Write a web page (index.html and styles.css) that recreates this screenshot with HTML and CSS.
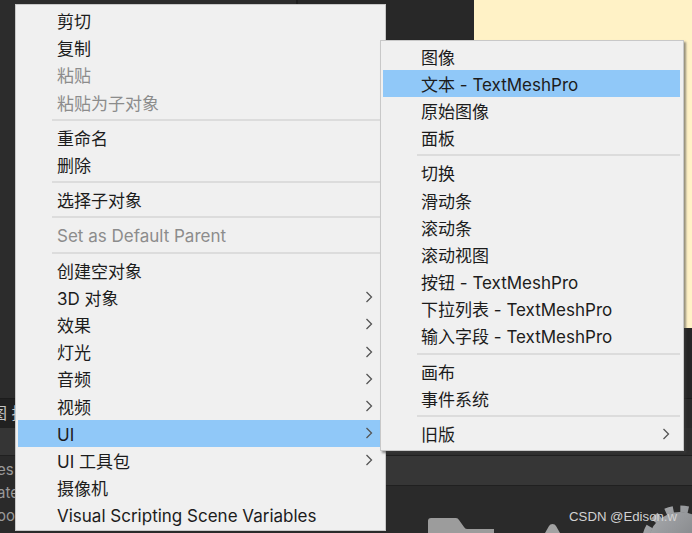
FILE: index.html
```html
<!DOCTYPE html>
<html lang="zh-CN">

<head>
    <meta charset="UTF-8">
    <title>Unity GameObject Menu</title>
    <link rel="stylesheet" href="styles.css">
</head>

<body>

    <!-- Editor behind the menus -->
    <div class="editor">
        <div class="scene">
            <div class="scene-side"></div>
            <div class="scene-dark"></div>
            <div class="scene-canvas"></div>
        </div>
        <div class="scene-rest">
            <div class="rest-side"></div>
        </div>
        <div class="tabs"><div class="tabs-text">图 技</div></div>
        <div class="toolbar"><div class="toolbar-side"></div></div>
        <div class="assets">
            <div class="asset-names">es<br>ate<br>oo</div>
            <div class="asset-main">
                <div class="asset-band"></div>
                <svg class="asset-icons" width="692" height="29" viewBox="0 0 692 29">
                    <defs>
                        <linearGradient id="gearFill" x1="0" y1="0" x2="1" y2="1">
                            <stop offset="0" stop-color="#a9abae"/>
                            <stop offset="1" stop-color="#6d6f73"/>
                        </linearGradient>
                    </defs>
                    <path d="M428 29V17q0-3 3-3h25q2 0 3 2l5 7q1 2 3 2h27v4z" fill="#9c9c9c"/>
                    <path d="M545 29l4-7q1-2 3.500-2t3.500 2l4 7z" fill="#a2a2a2"/>
                    <circle cx="680" cy="40" r="32" fill="url(#gearFill)"/>
                    <circle cx="680" cy="40" r="35" fill="none" stroke="url(#gearFill)" stroke-width="7" stroke-dasharray="8 7"/>
                </svg>
                <div class="watermark">CSDN @Edison.w</div>
            </div>
        </div>
    </div>

    <!-- Main context menu -->
    <div class="menu menu-main">
        <div class="item">剪切</div>
        <div class="item">复制</div>
        <div class="item off">粘贴</div>
        <div class="item off">粘贴为子对象</div>
        <div class="sep"></div>
        <div class="item">重命名</div>
        <div class="item">删除</div>
        <div class="sep"></div>
        <div class="item">选择子对象</div>
        <div class="sep"></div>
        <div class="item off latin">Set as Default Parent</div>
        <div class="sep"></div>
        <div class="item">创建空对象</div>
        <div class="item">3D 对象<svg class="arrow" width="8" height="12" viewBox="0 0 8 12"><path d="M1.5 1l5 5-5 5"/></svg></div>
        <div class="item">效果<svg class="arrow" width="8" height="12" viewBox="0 0 8 12"><path d="M1.5 1l5 5-5 5"/></svg></div>
        <div class="item">灯光<svg class="arrow" width="8" height="12" viewBox="0 0 8 12"><path d="M1.5 1l5 5-5 5"/></svg></div>
        <div class="item">音频<svg class="arrow" width="8" height="12" viewBox="0 0 8 12"><path d="M1.5 1l5 5-5 5"/></svg></div>
        <div class="item">视频<svg class="arrow" width="8" height="12" viewBox="0 0 8 12"><path d="M1.5 1l5 5-5 5"/></svg></div>
        <div class="item active latin">UI<svg class="arrow" width="8" height="12" viewBox="0 0 8 12"><path d="M1.5 1l5 5-5 5"/></svg></div>
        <div class="item">UI 工具包<svg class="arrow" width="8" height="12" viewBox="0 0 8 12"><path d="M1.5 1l5 5-5 5"/></svg></div>
        <div class="item">摄像机</div>
        <div class="item latin">Visual Scripting Scene Variables</div>
    </div>

    <!-- UI submenu -->
    <div class="menu menu-sub">
        <div class="item">图像</div>
        <div class="item active">文本 - TextMeshPro</div>
        <div class="item">原始图像</div>
        <div class="item">面板</div>
        <div class="sep"></div>
        <div class="item">切换</div>
        <div class="item">滑动条</div>
        <div class="item">滚动条</div>
        <div class="item">滚动视图</div>
        <div class="item">按钮 - TextMeshPro</div>
        <div class="item">下拉列表 - TextMeshPro</div>
        <div class="item">输入字段 - TextMeshPro</div>
        <div class="sep"></div>
        <div class="item">画布</div>
        <div class="item">事件系统</div>
        <div class="sep"></div>
        <div class="item">旧版<svg class="arrow" width="8" height="12" viewBox="0 0 8 12"><path d="M1.5 1l5 5-5 5"/></svg></div>
    </div>

</body>

</html>
```

FILE: styles.css
```css
/* General Styling */
html,
body {
    margin: 0;
    height: 533px;
    overflow: hidden;
    background-color: #2a2a2a;
}

body {
    font-family: Inter, "Noto Sans CJK SC", sans-serif;
}

/* Editor background */
.editor {
    display: flex;
    flex-direction: column;
    height: 533px;
}

.scene {
    display: flex;
    height: 328px;
}

.scene-side {
    width: 296px;
    background-color: #2c2c2c;
    border-right: 2px solid #1e1e1e;
}

.scene-dark {
    flex: 1;
    background-color: #282828;
}

.scene-canvas {
    width: 218px;
    background-color: #fff2c6;
}

.scene-rest {
    height: 70px;
    background-color: #262626;
    border-bottom: 1px solid #1c1c1c;
}

.rest-side {
    width: 298px;
    height: 70px;
    background-color: #2c2c2c;
}

.tabs {
    height: 29px;
    background-color: #2a2a2a;
    overflow: hidden;
}

.tabs-text {
    width: 100px;
    text-indent: -9px;
    background-color: #212121;
    color: #c4c4c4;
    font-size: 16px;
    line-height: 29px;
}

.toolbar {
    box-sizing: border-box;
    height: 28px;
    background-color: #2e2e2e;
    border-bottom: 1px solid #202020;
}

.toolbar-side {
    width: 100px;
    height: 27px;
    background-color: #353535;
}

.assets {
    flex: 1;
    display: flex;
    background-color: #2a2a2a;
    color: #9a9a9a;
    font-size: 15px;
    line-height: 23px;
    overflow: hidden;
}

.asset-names {
    margin-left: -3px;
    padding-top: 2px;
    width: 103px;
}

.asset-main {
    flex: 1;
}

.asset-band {
    height: 29px;
    background-color: #363636;
    border-bottom: 1px solid #202020;
}

.asset-icons {
    position: absolute;
    left: 0;
    bottom: 0;
}

.watermark {
    position: absolute;
    right: 15px;
    top: 509px;
    font-family: "Liberation Sans", sans-serif;
    font-size: 13.2px;
    line-height: 16px;
    color: #d2d2d2;
}

/* Menus */
.menu {
    position: absolute;
    box-sizing: border-box;
    background-color: #f0f0f0;
    border: 1px solid #c8c8c8;
    padding: 2px;
    color: #1c1c1c;
    font-size: 17px;
}

.menu-main {
    left: 15px;
    top: 4px;
    width: 371px;
    height: 527px;
}

.menu-sub {
    left: 380px;
    top: 40px;
    width: 304px;
    height: 411px;
    padding-top: 1.5px;
    padding-right: 3px;
    box-shadow: 2px 2px 2px rgba(60, 60, 60, 0.55);
}

.item {
    box-sizing: border-box;
    display: flex;
    align-items: center;
    justify-content: space-between;
    height: 27.2px;
    padding: 0 10px 0 39px;
    white-space: nowrap;
}

.menu-sub .item {
    padding-left: 38px;
}

/* latin-only rows sit higher than the ones with CJK text */
.latin {
    padding-top: 3px;
}

.latin .arrow {
    margin-top: -3px;
}

.active {
    background-color: #90c8f8;
}

.off {
    color: #8c8c8c;
}

.sep {
    height: 2px;
    margin: 3px 0 3px 34px;
    background-color: #dcdcdc;
}

.arrow {
    fill: none;
    stroke: #555;
    stroke-width: 1.3;
}
```
